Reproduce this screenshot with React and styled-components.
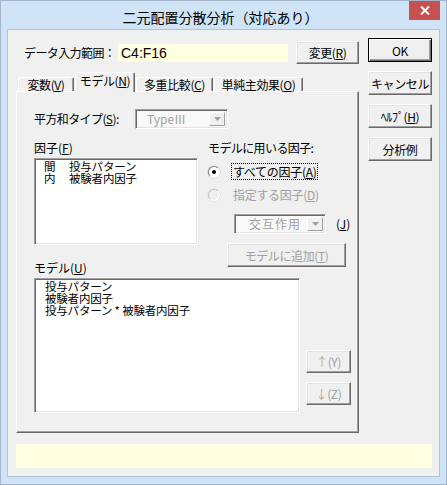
import React from "react";
import styled, { createGlobalStyle, css } from "styled-components";

const UI = `"Noto Sans CJK JP", "Noto Sans", "Liberation Sans", sans-serif`;

const Global = createGlobalStyle`
  html, body { margin: 0; padding: 0; background: #cfe4f7; }
  body { font-family: ${UI}; }
  * { box-sizing: border-box; }
  u { text-decoration: underline; text-underline-offset: 1px; }
`;

const Window = styled.div`
  width: 447px;
  height: 485px;
  border: 1px solid #a3b6ca;
  background: #cfe4f7;
  display: flex;
  flex-direction: column;
`;

const TitleBar = styled.div`
  height: 28px;
  display: grid;
  grid-template-columns: 1fr auto 1fr;
  align-items: start;
`;

const Title = styled.div`
  grid-column: 2;
  font-family: ${UI};
  font-size: 14px;
  line-height: 28px;
  padding-top: 2px;
  color: #000;
  white-space: nowrap;
  margin-left: -6px;
`;

const CloseBtn = styled.div`
  grid-column: 3;
  justify-self: end;
  width: 31px;
  height: 19px;
  margin-right: 6px;
  background: #c75050;
  display: flex;
  align-items: center;
  justify-content: center;
`;

const Client = styled.div`
  flex: 1;
  margin: 0 6px 7px;
  border: 1px solid #b2c3d5;
  background: #f0f0f0;
  padding: 8px 6px 8px 8px;
  display: grid;
  grid-template-columns: 343px 64px;
  grid-template-rows: auto auto;
  column-gap: 9px;
  row-gap: 11px;
  align-content: start;
  font-family: ${UI};
  font-size: 12px;
  color: #000;
`;

const LeftCol = styled.div`
  display: flex;
  flex-direction: column;
`;

const RightCol = styled.div`
  display: flex;
  flex-direction: column;
  gap: 9px;
`;

const RangeRow = styled.div`
  margin-top: 3px;
  height: 23px;
  display: flex;
  align-items: center;
  padding-left: 8px;
`;

const Label = styled.span`
  font-size: 12px;
  line-height: ${(p) => p.lh || 14}px;
  letter-spacing: ${(p) => (p.tight ? "-0.6px" : "0")};
  width: ${(p) => (p.w ? `${p.w}px` : "auto")};
  color: ${(p) => (p.disabled ? "#a0a0a0" : "#000")};
  white-space: nowrap;
  flex-shrink: 0;
`;

const YellowField = styled.div`
  width: ${(p) => p.w}px;
  height: ${(p) => p.h}px;
  background: #ffffe1;
  font-family: "Liberation Sans", ${UI};
  font-size: 14px;
  line-height: ${(p) => p.h}px;
  padding-left: 3px;
`;

const Btn = styled.div`
  width: ${(p) => p.w}px;
  height: ${(p) => p.h || 23}px;
  margin-left: ${(p) => p.ml || 0}px;
  flex-shrink: 0;
  background: #f0f0f0;
  border: 1px solid;
  border-color: #fff #696969 #696969 #fff;
  box-shadow: inset -1px -1px #a0a0a0, inset 1px 1px #e3e3e3;
  display: flex;
  align-items: center;
  justify-content: center;
  font-size: 12px;
  letter-spacing: -0.4px;
  white-space: nowrap;
  color: ${(p) => (p.disabled ? "#a0a0a0" : "#000")};
  ${(p) =>
    p.isDefault &&
    css`
      border-color: #000;
      box-shadow: inset 1px 1px #fff, inset -1px -1px #696969,
        inset -2px -2px #a0a0a0;
    `}
`;

const Arrow = styled.span`
  color: #cfa47a;
`;

const TabStrip = styled.div`
  margin-top: 9px;
  height: 18px;
  display: flex;
  align-items: flex-end;
  gap: 1px;
  padding-left: 2px;
  position: relative;
  z-index: 1;
`;

const Tab = styled.div`
  width: ${(p) => p.w}px;
  height: ${(p) => (p.active ? 20 : 14)}px;
  margin-bottom: ${(p) => (p.active ? -1 : 0)}px;
  background: #f0f0f0;
  border: 1px solid;
  border-bottom: none;
  border-color: #fff #696969 transparent #fff;
  box-shadow: inset -1px 0 #a0a0a0;
  border-radius: 2px 2px 0 0;
  display: flex;
  justify-content: center;
  align-items: flex-start;
  padding-top: ${(p) => (p.active ? 2 : 1)}px;
  font-size: 12px;
  line-height: 12px;
  letter-spacing: -0.4px;
  white-space: nowrap;
`;

const Panel = styled.div`
  width: 343px;
  height: 342px;
  background: #f0f0f0;
  border: 1px solid;
  border-color: #fff #696969 #696969 #fff;
  box-shadow: inset -1px -1px #a0a0a0;
  padding: 17px 0 0 17px;
  display: flex;
  flex-direction: column;
`;

const TypeRow = styled.div`
  display: flex;
  align-items: center;
  height: 20px;
`;

const Combo = styled.div`
  width: ${(p) => p.w}px;
  height: 20px;
  flex-shrink: 0;
  display: flex;
  align-items: stretch;
  border: 1px solid;
  border-color: #a0a0a0 #fff #fff #a0a0a0;
  box-shadow: inset 1px 1px #696969, inset -1px -1px #e3e3e3;
  background: #f9f9f9;
  padding: 2px;
`;

const ComboText = styled.span`
  flex: 1;
  color: #a0a0a0;
  font-size: 12px;
  line-height: 14px;
  padding-left: ${(p) => p.pl || 9}px;
  letter-spacing: ${(p) => (p.spaced ? "1px" : "0")};
  white-space: nowrap;
`;

const ComboArrow = styled.span`
  width: 16px;
  background: #f0f0f0;
  border: 1px solid;
  border-color: #fff #a0a0a0 #a0a0a0 #fff;
  display: flex;
  align-items: center;
  justify-content: center;
`;

const SectionA = styled.div`
  margin-top: 12px;
  display: flex;
  gap: 10px;
`;

const Column = styled.div`
  display: flex;
  flex-direction: column;
  width: ${(p) => (p.w ? `${p.w}px` : "auto")};
`;

const ListBox = styled.div`
  width: ${(p) => p.w}px;
  height: ${(p) => p.h}px;
  margin-top: ${(p) => p.mt || 0}px;
  flex-shrink: 0;
  background: #fff;
  border: 1px solid;
  border-color: #a0a0a0 #fff #fff #a0a0a0;
  box-shadow: inset 1px 1px #696969, inset -1px -1px #e3e3e3;
  padding: 1px 0 0 ${(p) => p.pl}px;
  font-size: 11.5px;
  line-height: 12px;
  letter-spacing: -0.2px;
`;

const ListItem = styled.div`
  display: flex;
  white-space: pre;
  height: 12px;
  line-height: 12px;
  overflow: visible;
`;

const Kind = styled.span`
  width: 25px;
`;

const RadioRow = styled.div`
  margin-top: ${(p) => p.mt}px;
  height: 17px;
  display: flex;
  align-items: center;
`;

const RadioCircle = styled.span`
  width: 12px;
  height: 12px;
  border-radius: 50%;
  background: ${(p) => (p.disabled ? "#f0f0f0" : "#fff")};
  border: 1px solid;
  border-color: ${(p) =>
    p.disabled ? "#c8c8c8 #fff #fff #c8c8c8" : "#8a8a8a #fff #fff #8a8a8a"};
  box-shadow: 0 0 0 0.5px ${(p) => (p.disabled ? "#d8d8d8" : "#c0c0c0")};
  display: flex;
  align-items: center;
  justify-content: center;
  margin-right: 13px;
  flex-shrink: 0;
`;

const Dot = styled.span`
  width: 4px;
  height: 4px;
  border-radius: 50%;
  background: #000;
`;

const RadioLabel = styled.span`
  height: 17px;
  padding: 0 1px;
  border: 1px dotted ${(p) => (p.focused ? "#000" : "transparent")};
  line-height: 15px;
  font-size: 12px;
  letter-spacing: -0.3px;
  white-space: nowrap;
  margin-left: -2px;
  color: ${(p) => (p.disabled ? "#a0a0a0" : "#000")};
`;

const ComboRow = styled.div`
  margin-top: 11px;
  padding-left: 26px;
  display: flex;
  align-items: center;
  gap: 10px;
`;

const SectionB = styled.div`
  margin-top: 4px;
  display: flex;
  align-items: flex-end;
  gap: 6px;
`;

const SideButtons = styled.div`
  display: flex;
  flex-direction: column;
  gap: 9px;
  margin-bottom: 8px;
`;

const StatusBar = styled.div`
  grid-column: 1 / -1;
  height: 24px;
  background: #ffffe1;
`;

const DownArrow = () => (
  <svg width="7" height="4" viewBox="0 0 7 4">
    <path d="M0 0h7L3.5 4z" fill="#a0a0a0" />
  </svg>
);

export default function App() {
  return (
    <>
      <Global />
      <Window>
        <TitleBar>
          <Title>二元配置分散分析（対応あり）</Title>
          <CloseBtn>
            <svg width="10" height="9" viewBox="0 0 10 9">
              <path d="M1 0.5L9 8.5M9 0.5L1 8.5" stroke="#fff" strokeWidth="2" />
            </svg>
          </CloseBtn>
        </TitleBar>
        <Client>
          <LeftCol>
            <RangeRow>
              <Label w={94} tight>データ入力範囲：</Label>
              <YellowField w={170} h={18}>C4:F16</YellowField>
              <Btn w={63} ml={8}>
                変更(<u>R</u>)
              </Btn>
            </RangeRow>
            <TabStrip>
              <Tab w={56}>
                変数(<u>V</u>)
              </Tab>
              <Tab w={60} active>
                モデル(<u>N</u>)
              </Tab>
              <Tab w={77}>
                多重比較(<u>C</u>)
              </Tab>
              <Tab w={89}>
                単純主効果(<u>O</u>)
              </Tab>
            </TabStrip>
            <Panel>
              <TypeRow>
                <Label w={101} tight>
                  平方和タイプ(<u>S</u>):
                </Label>
                <Combo w={93}>
                  <ComboText pl={9}>TypeⅢ</ComboText>
                  <ComboArrow>
                    <DownArrow />
                  </ComboArrow>
                </Combo>
              </TypeRow>
              <SectionA>
                <Column w={164}>
                  <Label>
                    因子(<u>F</u>)
                  </Label>
                  <ListBox w={164} h={87} mt={3} pl={9}>
                    <ListItem>
                      <Kind>間</Kind>投与パターン
                    </ListItem>
                    <ListItem>
                      <Kind>内</Kind>被験者内因子
                    </ListItem>
                  </ListBox>
                  <Label lh={12} style={{ marginTop: 17 }}>
                    モデル(<u>U</u>)
                  </Label>
                </Column>
                <Column>
                  <Label tight>モデルに用いる因子:</Label>
                  <RadioRow mt={8}>
                    <RadioCircle>
                      <Dot />
                    </RadioCircle>
                    <RadioLabel focused>
                      すべての因子(<u>A</u>)
                    </RadioLabel>
                  </RadioRow>
                  <RadioRow mt={6}>
                    <RadioCircle disabled />
                    <RadioLabel disabled>
                      指定する因子(<u>D</u>)
                    </RadioLabel>
                  </RadioRow>
                  <ComboRow>
                    <Combo w={92}>
                      <ComboText pl={12} spaced>
                        交互作用
                      </ComboText>
                      <ComboArrow>
                        <DownArrow />
                      </ComboArrow>
                    </Combo>
                    <Label>
                      (<u>J</u>)
                    </Label>
                  </ComboRow>
                  <Btn w={119} h={24} ml={19} disabled style={{ marginTop: 9 }}>
                    モデルに追加(<u>T</u>)
                  </Btn>
                </Column>
              </SectionA>
              <SectionB>
                <ListBox w={266} h={135} pl={10}>
                  <ListItem>投与パターン</ListItem>
                  <ListItem>被験者内因子</ListItem>
                  <ListItem>投与パターン * 被験者内因子</ListItem>
                </ListBox>
                <SideButtons>
                  <Btn w={45} disabled>
                    <Arrow>↑</Arrow>(Y)
                  </Btn>
                  <Btn w={45} disabled>
                    <Arrow>↓</Arrow>(Z)
                  </Btn>
                </SideButtons>
              </SectionB>
            </Panel>
          </LeftCol>
          <RightCol>
            <Btn w={64} h={24} isDefault>
              OK
            </Btn>
            <Btn w={64} h={24}>
              キャンセル
            </Btn>
            <Btn w={64} h={24}>
              ﾍﾙﾌﾟ(<u>H</u>)
            </Btn>
            <Btn w={64} h={24}>
              分析例
            </Btn>
          </RightCol>
          <StatusBar />
        </Client>
      </Window>
    </>
  );
}
